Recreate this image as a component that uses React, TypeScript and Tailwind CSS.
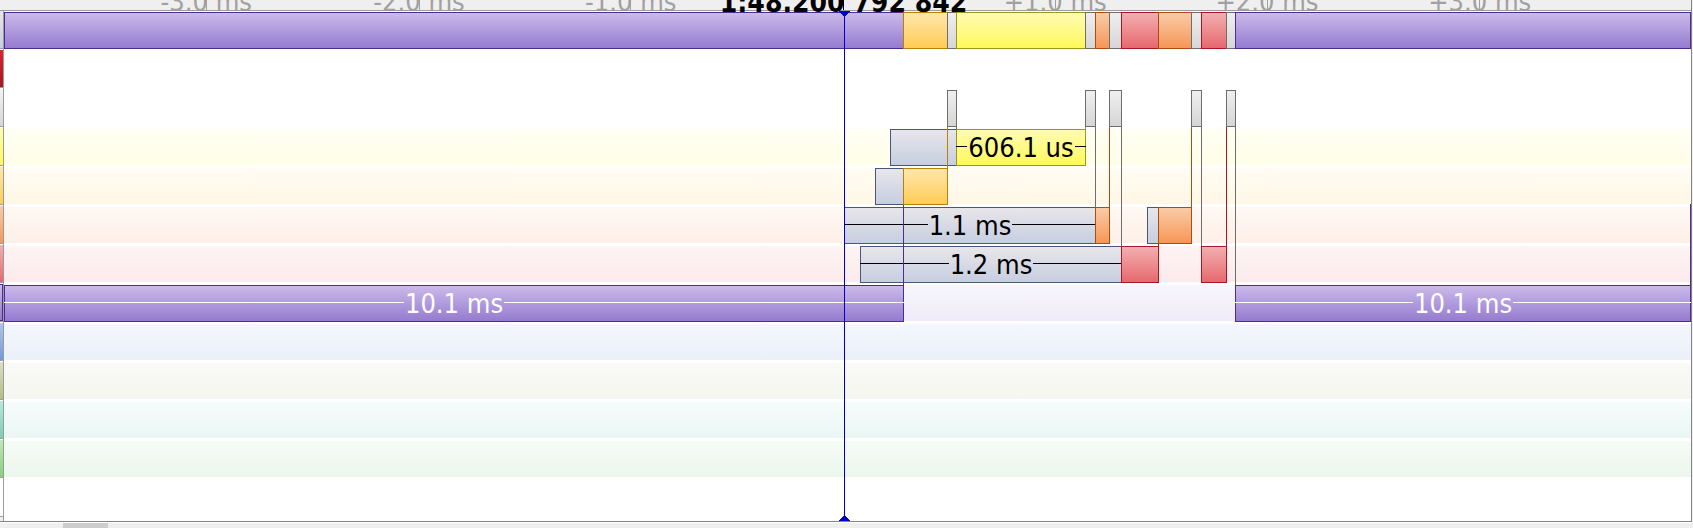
import React from "react";

type Tone = "idle" | "gray" | "yellow" | "amber" | "orange" | "red" | "purple";

interface Bar {
  from: number;
  to: number;
  tone: Tone;
  label?: string;
}

interface Lane {
  name: string;
  fill: string;
  chip: string;
  bars: Bar[];
}

interface Link {
  at: number;
  top: number;
  height: number;
  color: string;
}

const SPAN = 1687;
const pct = (value: number) => `${(value / SPAN) * 100}%`;

const TONES: Record<Tone, string> = {
  idle: "border-[#465777] from-[#e8e6ea] to-[#c6cee0]",
  gray: "border-[#6e6e6e] from-[#efefef] to-[#d6d6d6]",
  yellow: "border-[#9c961a] from-[#fffbae] to-[#fff955]",
  amber: "border-[#b87f0a] from-[#ffe7a8] to-[#ffcb52]",
  orange: "border-[#ae4c0e] from-[#f9cba6] to-[#f69656]",
  red: "border-[#a81822] from-[#f2aeb1] to-[#e5686e]",
  purple: "border-[#4a2d8c] from-[#cbbaea] to-[#967bcf]",
};

const OVERVIEW: Bar[] = [
  { from: 0, to: 899, tone: "purple" },
  { from: 899, to: 943, tone: "amber" },
  { from: 943, to: 952, tone: "gray" },
  { from: 952, to: 1081, tone: "yellow" },
  { from: 1081, to: 1091, tone: "gray" },
  { from: 1091, to: 1105, tone: "orange" },
  { from: 1105, to: 1117, tone: "gray" },
  { from: 1117, to: 1154, tone: "red" },
  { from: 1154, to: 1187, tone: "orange" },
  { from: 1187, to: 1197, tone: "gray" },
  { from: 1197, to: 1222, tone: "red" },
  { from: 1222, to: 1231, tone: "gray" },
  { from: 1231, to: 1687, tone: "purple" },
];

const LANES: Lane[] = [
  { name: "crimson", fill: "", chip: "from-[#e0222e] to-[#a8161f]", bars: [] },
  {
    name: "gray",
    fill: "",
    chip: "from-[#f3f3f3] to-[#d6d6d6]",
    bars: [
      { from: 943, to: 953, tone: "gray" },
      { from: 1081, to: 1092, tone: "gray" },
      { from: 1105, to: 1118, tone: "gray" },
      { from: 1187, to: 1198, tone: "gray" },
      { from: 1222, to: 1232, tone: "gray" },
    ],
  },
  {
    name: "yellow",
    fill: "bg-linear-to-b from-[#fffff4] to-[#fffee8]",
    chip: "from-[#fffbae] to-[#fff955]",
    bars: [
      { from: 886, to: 953, tone: "idle" },
      { from: 952, to: 1082, tone: "yellow", label: "606.1 us" },
    ],
  },
  {
    name: "amber",
    fill: "bg-linear-to-b from-[#fffcf3] to-[#fff7e6]",
    chip: "from-[#ffe7a8] to-[#ffcb52]",
    bars: [
      { from: 871, to: 900, tone: "idle" },
      { from: 899, to: 944, tone: "amber" },
    ],
  },
  {
    name: "orange",
    fill: "bg-linear-to-b from-[#fef8f3] to-[#fef0e8]",
    chip: "from-[#f9cba6] to-[#f69656]",
    bars: [
      { from: 840, to: 1092, tone: "idle", label: "1.1 ms" },
      { from: 1091, to: 1106, tone: "orange" },
      { from: 1143, to: 1155, tone: "idle" },
      { from: 1154, to: 1188, tone: "orange" },
    ],
  },
  {
    name: "red",
    fill: "bg-linear-to-b from-[#fdf4f4] to-[#fbeaeb]",
    chip: "from-[#f2aeb1] to-[#e5686e]",
    bars: [
      { from: 856, to: 1118, tone: "idle", label: "1.2 ms" },
      { from: 1117, to: 1155, tone: "red" },
      { from: 1197, to: 1223, tone: "red" },
    ],
  },
  {
    name: "purple",
    fill: "bg-linear-to-b from-[#f7f5fc] to-[#efecf8]",
    chip: "border-y border-r border-[#4a2d8c] from-[#cbbaea] to-[#967bcf]",
    bars: [
      { from: 0, to: 900, tone: "purple", label: "10.1 ms" },
      { from: 1231, to: 1687, tone: "purple", label: "10.1 ms" },
    ],
  },
  { name: "blue", fill: "bg-linear-to-b from-[#f4f7fd] to-[#ebf0f9]", chip: "from-[#b0c7ee] to-[#7198da]", bars: [] },
  { name: "olive", fill: "bg-linear-to-b from-[#fafaf7] to-[#f4f6ef]", chip: "from-[#dce0c4] to-[#b3bd85]", bars: [] },
  { name: "teal", fill: "bg-linear-to-b from-[#f6fcfb] to-[#ebf7f4]", chip: "from-[#b5e9dc] to-[#7dcdb6]", bars: [] },
  { name: "green", fill: "bg-linear-to-b from-[#f6fbf6] to-[#ecf7ec]", chip: "from-[#bfe8b9] to-[#86cf7b]", bars: [] },
];

// Vertical hand-overs between lanes; offsets count from the top of the first lane.
const LINKS: Link[] = [
  { at: 899, top: 154, height: 80, color: "bg-[#4a2d8c]" },
  { at: 943, top: 76, height: 41, color: "bg-[#b87f0a]" },
  { at: 952, top: 76, height: 2, color: "bg-[#6e6e6e]" },
  { at: 1081, top: 76, height: 2, color: "bg-[#9c961a]" },
  { at: 1091, top: 76, height: 80, color: "bg-[#6e6e6e]" },
  { at: 1105, top: 76, height: 80, color: "bg-[#ae4c0e]" },
  { at: 1117, top: 76, height: 119, color: "bg-[#6e6e6e]" },
  { at: 1154, top: 193, height: 2, color: "bg-[#a81822]" },
  { at: 1187, top: 76, height: 80, color: "bg-[#ae4c0e]" },
  { at: 1197, top: 76, height: 119, color: "bg-[#6e6e6e]" },
  { at: 1222, top: 76, height: 119, color: "bg-[#a81822]" },
  { at: 1231, top: 76, height: 158, color: "bg-[#6e6e6e]" },
  { at: 1686, top: 153, height: 81, color: "bg-[#4a2d8c]" },
];

const TICKS = [
  { at: 202, label: "-3.0 ms" },
  { at: 415, label: "-2.0 ms" },
  { at: 627, label: "-1.0 ms" },
  { at: 1052, label: "+1.0 ms" },
  { at: 1264, label: "+2.0 ms" },
  { at: 1477, label: "+3.0 ms" },
];

const CURSOR = 840;

function Ruler() {
  return (
    <header className="relative h-[11px] border-b border-[#9c9c9c] bg-[#efefef] pl-1 pr-[2px]">
      <div className="relative h-full overflow-hidden">
        {TICKS.map((tick) => (
          <div key={tick.label} className="absolute bottom-0 flex w-px justify-center" style={{ left: pct(tick.at) }}>
            <span className="-mb-2 text-[27px] leading-8 whitespace-nowrap text-[#a0a0a0]">{tick.label}</span>
            <i className="absolute bottom-0 h-[10px] w-px bg-[#a0a0a0]" />
          </div>
        ))}
      </div>
      <div className="absolute inset-y-0 left-1 right-[2px] z-10">
        <div className="absolute bottom-0 flex w-px justify-center" style={{ left: pct(CURSOR) }}>
          <span className="-mb-[9px] text-[28px] leading-8 font-bold whitespace-nowrap text-black">1:48.200 792 842</span>
          <i className="absolute bottom-0 h-[10px] w-px bg-black" />
        </div>
      </div>
    </header>
  );
}

function LaneBar({ bar }: { bar: Bar }) {
  const light = bar.tone === "purple";
  const rule = light ? "bg-white" : "bg-black";
  return (
    <div
      className={`absolute top-0 flex h-[37px] border bg-linear-to-b ${TONES[bar.tone]}`}
      style={{ left: pct(bar.from), width: pct(bar.to - bar.from) }}
    >
      {bar.label && (
        <div className={`-mx-px flex h-[33px] flex-1 items-center gap-px ${light ? "text-white" : "text-black"}`}>
          <i className={`h-px flex-1 ${rule}`} />
          <span className="pt-[2px] text-[27px] leading-8 whitespace-nowrap">{bar.label}</span>
          <i className={`h-px flex-1 ${rule}`} />
        </div>
      )}
    </div>
  );
}

function Gutter() {
  return (
    <aside className="flex w-1 flex-col border-r border-[#9c9c9c]">
      <div className="h-[38px] border-b border-[#9c9c9c] bg-linear-to-b from-[#e8e6ea] to-[#c6cee0]" />
      {LANES.map((lane) => (
        <div key={lane.name} className="h-[39px] border-b border-[#9c9c9c] pt-px">
          <div className={`h-[37px] bg-linear-to-b ${lane.chip}`} />
        </div>
      ))}
      <div className="h-[39px] border-b border-[#9c9c9c]" />
      <div className="flex-1 bg-[#efefef]" />
    </aside>
  );
}

function Cursor() {
  return (
    <div className="absolute inset-y-0 z-20 flex w-px flex-col items-center" style={{ left: pct(CURSOR) }}>
      <svg className="h-[5px] w-[11px] shrink-0" viewBox="0 0 11 5" shapeRendering="crispEdges" fill="#0000cd">
        <path d="M0 0H11V1H10V2H9V3H8V4H7V5H4V4H3V3H2V2H1V1H0Z" />
      </svg>
      <i className="w-px flex-1 bg-[#0000cd]" />
      <svg className="h-[5px] w-[11px] shrink-0" viewBox="0 0 11 5" shapeRendering="crispEdges" fill="#0000cd">
        <path d="M0 5H11V4H10V3H9V2H8V1H7V0H4V1H3V2H2V3H1V4H0Z" />
      </svg>
    </div>
  );
}

function Plot() {
  return (
    <section className="relative flex-1 pt-px pb-11">
      <div className="flex h-[37px]">
        {OVERVIEW.map((bar) => (
          <div
            key={bar.from}
            className={`border-y border-l bg-linear-to-b last:border-r ${TONES[bar.tone]}`}
            style={{ width: pct(bar.to - bar.from) }}
          />
        ))}
      </div>
      <div className="relative flex flex-col gap-[3px] pt-[2px]">
        {LANES.map((lane) => (
          <div key={lane.name} className={`relative h-9 ${lane.fill}`}>
            {lane.bars.map((bar) => (
              <LaneBar key={bar.from} bar={bar} />
            ))}
          </div>
        ))}
        <div className="absolute inset-x-0 top-[2px]">
          {LINKS.map((link) => (
            <i
              key={link.at}
              className={`absolute w-px ${link.color}`}
              style={{ left: pct(link.at), top: link.top, height: link.height }}
            />
          ))}
        </div>
      </div>
      <Cursor />
    </section>
  );
}

export default function App() {
  return (
    <main className="w-full overflow-hidden bg-white font-['DejaVu_Sans_Condensed','DejaVu_Sans',sans-serif]">
      <div className="flex bg-[#efefef] pr-px">
        <div className="min-w-0 flex-1 border-r border-b border-[#83838b] bg-white">
          <Ruler />
          <div className="flex">
            <Gutter />
            <Plot />
          </div>
        </div>
      </div>
      <div className="mt-px h-[5px] bg-[#efefef] pl-[63px]">
        <div className="h-full w-[45px] bg-[#cdcdcd]" />
      </div>
    </main>
  );
}
